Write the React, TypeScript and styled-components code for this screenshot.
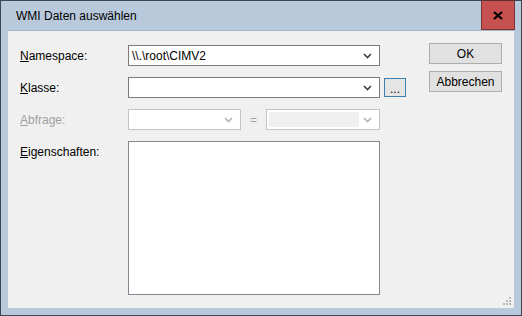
import styled, { createGlobalStyle } from 'styled-components';

const GlobalStyle = createGlobalStyle`
  html, body {
    margin: 0;
    padding: 0;
    background: #ffffff;
  }
  body {
    font-family: "Liberation Sans", Arial, sans-serif;
    font-size: 12px;
    color: #000000;
  }
`;

const Window = styled.div`
  position: relative;
  width: 522px;
  height: 316px;
  box-sizing: border-box;
  border: 1px solid #3f4753;
  background: #b9c9dc;
  display: flex;
  flex-direction: column;
`;

const TitleBar = styled.div`
  height: 29px;
  display: flex;
  align-items: flex-start;
`;

const Title = styled.span`
  padding: 8px 0 0 15px;
  font-size: 12px;
  color: #000000;
`;

const CloseButton = styled.div`
  margin-left: auto;
  margin-right: 6px;
  margin-top: -1px;
  width: 34px;
  height: 30px;
  box-sizing: border-box;
  background: #c75050;
  border: 1px solid #7d3434;
  border-top-color: #5a3030;
  display: flex;
  align-items: center;
  justify-content: center;
`;

const Client = styled.div`
  position: relative;
  flex: 1;
  margin: 0 7px 7px 7px;
  background: #f0f0f0;
  border-top: 1px solid #a4b3c6;
  display: flex;
  align-items: flex-start;
`;

const Form = styled.div`
  flex-shrink: 0;
  margin: 14px 0 0 12px;
  display: flex;
  flex-direction: column;
  gap: 11px;
`;

const Row = styled.div<{ $top?: boolean }>`
  display: flex;
  align-items: ${(p) => (p.$top ? 'flex-start' : 'center')};
`;

const Label = styled.label<{ $disabled?: boolean; $top?: boolean }>`
  width: 108px;
  padding-top: ${(p) => (p.$top ? '4px' : '0')};
  color: ${(p) => (p.$disabled ? '#a0a0a0' : '#000000')};
`;

const Combo = styled.div<{ $width: number; $disabled?: boolean }>`
  width: ${(p) => p.$width}px;
  height: 21px;
  box-sizing: border-box;
  border: 1px solid ${(p) => (p.$disabled ? '#c4c4c4' : '#7a7a7a')};
  background: #ffffff;
  display: flex;
  align-items: center;
`;

const ComboText = styled.span`
  flex: 1;
  padding-left: 3px;
  white-space: nowrap;
`;

const ComboField = styled.span`
  flex: 1;
  align-self: stretch;
  margin: 2px 0 2px 2px;
  background: #f0f0f0;
`;

const Arrow = styled.span`
  width: 17px;
  display: flex;
  align-items: center;
  justify-content: center;
  padding-right: 3px;
`;

const SmallButton = styled.div`
  margin-left: 4px;
  width: 22px;
  height: 19px;
  box-sizing: border-box;
  border: 1px solid #3c7fb1;
  background: #e5e5e5;
  display: flex;
  align-items: flex-end;
  justify-content: center;
  line-height: 14px;
`;

const Equals = styled.span`
  width: 25px;
  text-align: center;
  color: #a0a0a0;
`;

const ListBox = styled.div`
  width: 252px;
  height: 154px;
  box-sizing: border-box;
  border: 1px solid #828790;
  background: #ffffff;
`;

const ButtonColumn = styled.div`
  flex-shrink: 0;
  margin: 12px 0 0 23px;
  display: flex;
  flex-direction: column;
  gap: 7px;
`;

const DialogButton = styled.div`
  width: 73px;
  height: 21px;
  box-sizing: border-box;
  border: 1px solid #adadad;
  background: #e1e1e1;
  display: flex;
  align-items: center;
  justify-content: center;
`;

const Grip = styled.svg`
  position: absolute;
  right: 2px;
  bottom: 2px;
`;

const Chevron = ({ disabled }: { disabled?: boolean }) => (
  <svg width="9" height="6" viewBox="0 0 9 6">
    <polyline
      points="1,1 4.5,4.5 8,1"
      fill="none"
      stroke={disabled ? '#b4b4b4' : '#404040'}
      strokeWidth="1.6"
    />
  </svg>
);

const App = () => {
  return (
    <>
      <GlobalStyle />
      <Window>
        <TitleBar>
          <Title>WMI Daten auswählen</Title>
          <CloseButton>
            <svg width="10" height="9" viewBox="0 0 10 9">
              <path d="M1 1 L9 8 M9 1 L1 8" stroke="#000000" strokeWidth="2.2" />
            </svg>
          </CloseButton>
        </TitleBar>
        <Client>
          <Form>
            <Row>
              <Label>
                <u>N</u>amespace:
              </Label>
              <Combo $width={252}>
                <ComboText>\\.\root\CIMV2</ComboText>
                <Arrow>
                  <Chevron />
                </Arrow>
              </Combo>
            </Row>
            <Row>
              <Label>
                <u>K</u>lasse:
              </Label>
              <Combo $width={252}>
                <ComboText />
                <Arrow>
                  <Chevron />
                </Arrow>
              </Combo>
              <SmallButton>...</SmallButton>
            </Row>
            <Row>
              <Label $disabled>
                <u>A</u>bfrage:
              </Label>
              <Combo $width={113} $disabled>
                <ComboText />
                <Arrow>
                  <Chevron disabled />
                </Arrow>
              </Combo>
              <Equals>=</Equals>
              <Combo $width={114} $disabled>
                <ComboField />
                <Arrow>
                  <Chevron disabled />
                </Arrow>
              </Combo>
            </Row>
            <Row $top>
              <Label $top>
                <u>E</u>igenschaften:
              </Label>
              <ListBox />
            </Row>
          </Form>
          <ButtonColumn>
            <DialogButton>OK</DialogButton>
            <DialogButton>Abbrechen</DialogButton>
          </ButtonColumn>
          <Grip width="9" height="9" viewBox="0 0 9 9">
            <g fill="#b8b8b8">
              <rect x="6" y="0" width="2" height="2" />
              <rect x="3" y="3" width="2" height="2" />
              <rect x="6" y="3" width="2" height="2" />
              <rect x="0" y="6" width="2" height="2" />
              <rect x="3" y="6" width="2" height="2" />
              <rect x="6" y="6" width="2" height="2" />
            </g>
          </Grip>
        </Client>
      </Window>
    </>
  );
};

export default App;
